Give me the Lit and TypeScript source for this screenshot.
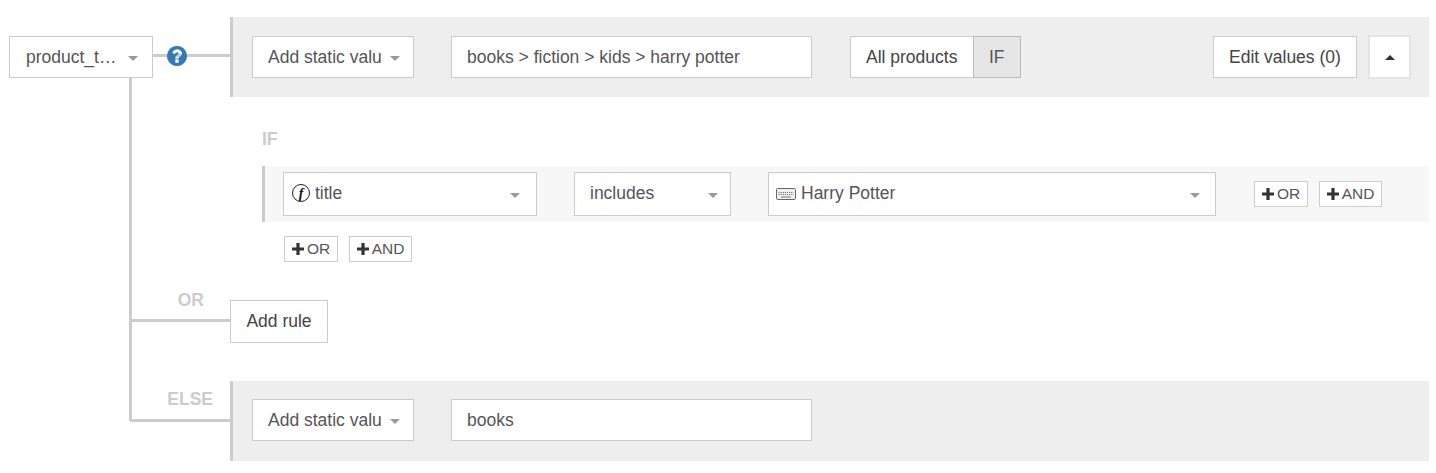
import { LitElement, html, css, svg } from "lit";
import { customElement } from "lit/decorators.js";

const caret = html`<span class="caret"></span>`;
const plus = html`<svg class="plus" viewBox="0 0 12 12"><path d="M4.4 0h3.2v4.4H12v3.2H7.6V12H4.4V7.6H0V4.4h4.4z" /></svg>`;
const help = html`<svg class="help" viewBox="128 128 1536 1536"><path fill="#337ab7" d="M1024 1376v-192q0-14-9-23t-23-9h-192q-14 0-23 9t-9 23v192q0 14 9 23t23 9h192q14 0 23-9t9-23zm256-672q0-88-55.5-163t-138.5-116-170-41q-243 0-371 213-15 24 8 42l132 100q7 6 19 6 16 0 25-12 53-68 86-92 34-24 86-24 48 0 85.5 26t37.5 59q0 38-20 61t-68 45q-63 28-115.5 86.5t-52.5 125.5v36q0 14 9 23t23 9h192q14 0 23-9t9-23q0-19 21.5-49.5t54.5-49.5q32-18 49-28.5t46-35 44.5-48 28-60.5 12.5-81zm384 192q0 209-103 385.5t-279.5 279.5-385.5 103-385.5-103-279.5-279.5-103-385.5 103-385.5 279.5-279.5 385.5-103 385.5 103 279.5 279.5 103 385.5z"/></svg>`;
const keys = svg`<path d="M2.5 4.5h15M2.5 6.5h15" stroke-dasharray="1.2 .9" /><path d="M5 9h10" />`;
const keyboard = html`<svg class="kbd" viewBox="0 0 20 12"><rect x=".5" y=".5" width="19" height="11" rx="1.2" fill="#f0f0f0" stroke="#666"/><g stroke="#777" stroke-width="1" fill="none">${keys}</g></svg>`;

@customElement("app-root")
export class AppRoot extends LitElement {
  static styles = css`
    :host {
      display: block;
      position: relative;
      width: 1436px;
      height: 473px;
      box-sizing: border-box;
      padding-top: 17px;
      background: #fff;
      font-family: "Liberation Sans", Arial, sans-serif;
      font-size: 17.5px;
      color: #555;
      overflow: hidden;
    }
    * { box-sizing: border-box; }
    .trunk {
      position: absolute;
      left: 129px;
      top: 78px;
      width: 3px;
      height: 343px;
      background: #ccc;
    }
    .row { display: flex; }
    .gutter {
      width: 230px;
      flex: none;
      display: flex;
      align-items: center;
      position: relative;
    }
    .gutter.head { padding-left: 9px; }
    .gutter.head .line { margin-bottom: 4px; }
    .line { flex: 1; height: 3px; background: #ccc; }
    .help {
      position: absolute;
      left: 167px;
      top: 29px;
      width: 20px;
      height: 20px;
    }
    .panel {
      width: 1199px;
      height: 80px;
      background: #eee;
      border-left: 3px solid #ccc;
      display: flex;
      align-items: center;
      padding: 0 18px 0 19px;
    }
    .elserow .panel { padding-bottom: 2px; }
    .ctl {
      display: flex;
      align-items: center;
      height: 42px;
      background: #fff;
      border: 1px solid #ccc;
      padding: 0 15px;
      white-space: nowrap;
      flex: none;
    }
    .ctl .label { flex: 1; overflow: hidden; }
    .caret {
      width: 0;
      height: 0;
      border-left: 5px solid transparent;
      border-right: 5px solid transparent;
      border-top: 5px solid #999;
      margin-top: 2px;
      flex: none;
    }
    .pt { width: 144px; padding: 0 14px 0 16px; }
    .pt .label { margin-right: 6px; }
    .static { width: 162px; padding-right: 13px; }
    .static .label { margin-right: 9px; }
    .input { width: 361px; margin-left: 37px; color: #555; }
    .toggle { display: flex; margin-left: 38px; }
    .toggle .ctl:first-child { width: 123px; border-right: none; color: #444; }
    .toggle .on { width: 48px; background: #e6e6e6; border-color: #bbb; }
    .edit { margin-left: auto; width: 144px; color: #444; }
    .up {
      margin-left: 11px;
      width: 43px;
      height: 44px;
      border: 2px solid #e4e4e4;
      justify-content: center;
      padding: 0;
    }
    .up i {
      width: 0;
      height: 0;
      border-left: 5px solid transparent;
      border-right: 5px solid transparent;
      border-bottom: 5px solid #333;
    }
    .rules { margin-left: 232px; }
    .tag {
      font-weight: 700;
      color: #ccc;
      font-size: 17.5px;
      line-height: 20px;
    }
    .if { margin: 32px 0 0 30px; height: 37px; }
    .cond {
      height: 56px;
      width: 1167px;
      margin-left: 30px;
      background: #f7f7f7;
      border-left: 3px solid #ccc;
      display: flex;
      align-items: center;
      padding-left: 18px;
    }
    .cond .ctl { height: 44px; padding-bottom: 2px; }
    .field { width: 254px; padding-right: 16px; }
    .field .fn {
      width: 18px;
      height: 18px;
      border: 1.5px solid #222;
      border-radius: 50%;
      margin: 0 5px 0 -7px;
      display: flex;
      align-items: center;
      justify-content: center;
      font: italic 700 14px/15px "Liberation Serif", serif;
      color: #111;
      flex: none;
    }
    .op { width: 157px; margin-left: 37px; padding-right: 12px; }
    .val { width: 448px; margin-left: 37px; padding-right: 15px; }
    .val .kbd { width: 20px; height: 12px; margin: 2px 5px 0 -8px; flex: none; }
    .cond .caret { margin-top: 4px; }
    .chips { display: flex; gap: 11px; }
    .cond .chips { margin-left: 38px; }
    .chip {
      display: flex;
      align-items: center;
      justify-content: center;
      height: 26px;
      width: 54px;
      background: #fff;
      border: 1px solid #ccc;
      font-size: 15.5px;
      color: #555;
      white-space: nowrap;
    }
    .chip.and { width: 63px; }
    .plus { width: 12px; height: 12px; fill: #333; margin-right: 3px; flex: none; }
    .under { margin: 14px 0 0 52px; }
    .orrow { margin-top: 38px; height: 43px; align-items: stretch; }
    .orrow .gutter, .elserow .gutter { padding-left: 130px; position: relative; }
    .orrow .gutter { padding-bottom: 2px; }
    .orrow .line, .elserow .line { flex: 1; }
    .orrow .tag { position: absolute; right: 26px; top: -10px; }
    .elserow .gutter { padding-bottom: 2px; }
    .elserow .tag { position: absolute; right: 17px; top: 8px; }
    .add { width: 98px; height: 43px; color: #444; justify-content: center; padding: 0; }
    .elserow { margin-top: 38px; }
  `;

  render() {
    return html`
      <div class="trunk"></div>
      <div class="row">
        <div class="gutter head">
          <div class="ctl pt"><span class="label">product_t…</span>${caret}</div>
          <div class="line"></div>
          ${help}
        </div>
        <div class="panel">
          <div class="ctl static"><span class="label">Add static valu</span>${caret}</div>
          <div class="ctl input">books &gt; fiction &gt; kids &gt; harry potter</div>
          <div class="toggle">
            <div class="ctl">All products</div>
            <div class="ctl on">IF</div>
          </div>
          <div class="ctl edit">Edit values (0)</div>
          <div class="ctl up"><i></i></div>
        </div>
      </div>
      <div class="rules">
        <div class="tag if">IF</div>
        <div class="cond">
          <div class="ctl field"><span class="fn">f</span><span class="label">title</span>${caret}</div>
          <div class="ctl op"><span class="label">includes</span>${caret}</div>
          <div class="ctl val">${keyboard}<span class="label">Harry Potter</span>${caret}</div>
          <div class="chips">
            <div class="chip">${plus}OR</div>
            <div class="chip and">${plus}AND</div>
          </div>
        </div>
        <div class="chips under">
          <div class="chip">${plus}OR</div>
          <div class="chip and">${plus}AND</div>
        </div>
      </div>
      <div class="row orrow">
        <div class="gutter"><span class="tag">OR</span><div class="line"></div></div>
        <div class="ctl add">Add rule</div>
      </div>
      <div class="row elserow">
        <div class="gutter"><span class="tag">ELSE</span><div class="line"></div></div>
        <div class="panel">
          <div class="ctl static"><span class="label">Add static valu</span>${caret}</div>
          <div class="ctl input">books</div>
        </div>
      </div>
    `;
  }
}
